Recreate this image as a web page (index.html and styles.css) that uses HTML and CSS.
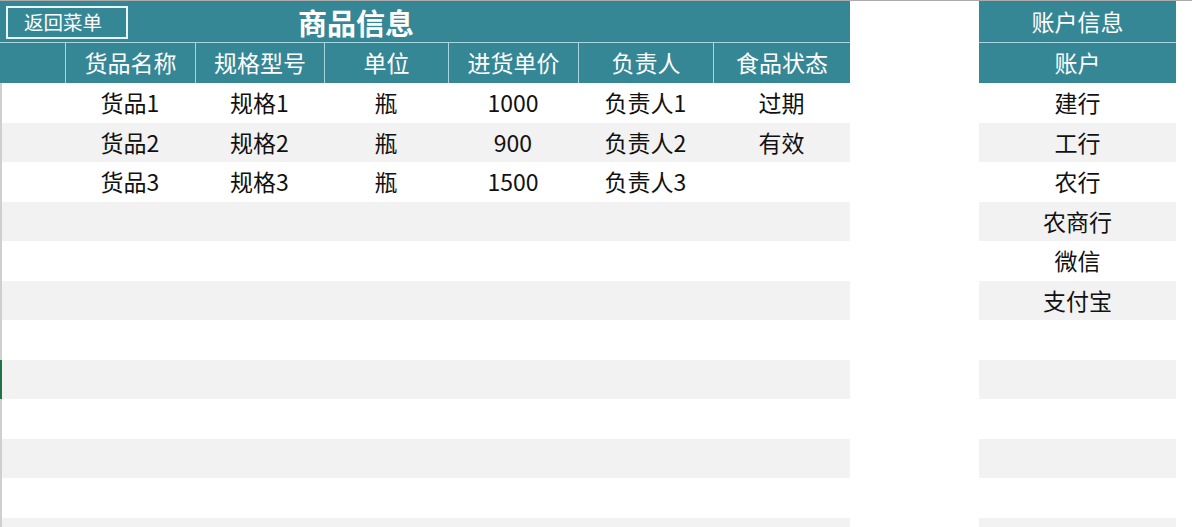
FILE: index.html
```html
<!DOCTYPE html>
<html lang="zh">
<head>
<meta charset="utf-8">
<link rel="stylesheet" href="styles.css">
</head>
<body>
<div class="topline"></div>
<div class="sheet">
  <section class="goods">
    <div class="title-row">
      <button class="back-btn">返回菜单</button>
      <h1 class="title">商品信息</h1>
    </div>
    <div class="grid">
      <div class="hd first"></div>
      <div class="hd">货品名称</div>
      <div class="hd">规格型号</div>
      <div class="hd">单位</div>
      <div class="hd">进货单价</div>
      <div class="hd">负责人</div>
      <div class="hd">食品状态</div>

      <div class="row"><div class="c first"></div><div class="c">货品1</div><div class="c">规格1</div><div class="c">瓶</div><div class="c">1000</div><div class="c">负责人1</div><div class="c">过期</div></div>
      <div class="row alt"><div class="c first"></div><div class="c">货品2</div><div class="c">规格2</div><div class="c">瓶</div><div class="c">900</div><div class="c">负责人2</div><div class="c">有效</div></div>
      <div class="row"><div class="c first"></div><div class="c">货品3</div><div class="c">规格3</div><div class="c">瓶</div><div class="c">1500</div><div class="c">负责人3</div><div class="c"></div></div>
      <div class="row alt"><div class="c first"></div></div>
      <div class="row"><div class="c first"></div></div>
      <div class="row alt"><div class="c first"></div></div>
      <div class="row"><div class="c first"></div></div>
      <div class="row alt"><div class="c first active"></div></div>
      <div class="row"><div class="c first"></div></div>
      <div class="row alt"><div class="c first"></div></div>
      <div class="row"><div class="c first"></div></div>
      <div class="row alt"><div class="c first"></div></div>
    </div>
  </section>

  <section class="accounts">
    <div class="acc-title">账户信息</div>
    <div class="acc-hd">账户</div>
    <div class="acc-row">建行</div>
    <div class="acc-row alt">工行</div>
    <div class="acc-row">农行</div>
    <div class="acc-row alt">农商行</div>
    <div class="acc-row">微信</div>
    <div class="acc-row alt">支付宝</div>
    <div class="acc-row"></div>
    <div class="acc-row alt"></div>
    <div class="acc-row"></div>
    <div class="acc-row alt"></div>
    <div class="acc-row"></div>
    <div class="acc-row alt"></div>
  </section>
</div>
</body>
</html>
```

FILE: styles.css
```css
* { box-sizing: border-box; }
html, body {
  margin: 0;
  padding: 0;
  background: #ffffff;
  overflow: hidden;
  height: 527px;
}
body {
  font-family: "Noto Sans CJK SC", "Noto Sans", sans-serif;
  color: #111;
}
.topline {
  height: 1px;
  background: #ababab;
}
.sheet {
  display: flex;
  gap: 129px;
  align-items: flex-start;
  height: 526px;
  overflow: hidden;
}
.goods {
  width: 850px;
}
.title-row {
  height: 42px;
  background: #368796;
  border-bottom: 1px solid #a9d6de;
  display: flex;
  align-items: center;
  padding-left: 6px;
}
.back-btn {
  width: 122px;
  height: 33px;
  margin-top: 2px;
  border: 2px solid #e8f4f6;
  background: transparent;
  color: #fff;
  font-family: inherit;
  font-size: 19.5px;
  line-height: 26px;
  padding: 0 8px 2px 0;
  text-align: center;
}
.title {
  margin: 0 0 0 170px;
  font-size: 29px;
  font-weight: 700;
  color: #fff;
  line-height: 38px;
  height: 38px;
  padding-bottom: 1px;
}
.grid {
  display: grid;
  grid-template-columns: 65px 130px 129px 124px 130px 135px 137px;
}
.hd {
  height: 40px;
  background: #368796;
  color: #fff;
  font-size: 23px;
  display: flex;
  align-items: center;
  justify-content: center;
  border-left: 1px solid #a9d6de;
  padding-bottom: 2px;
}
.hd.first { border-left: none; }
.row {
  display: contents;
}
.c {
  height: 39.5px;
  font-size: 23px;
  display: flex;
  align-items: center;
  justify-content: center;
  padding-bottom: 1px;
}
.row .c.first { grid-column: 1; border-left: 2px solid #cfcfcf; }
.row .c.first.active { border-left-color: #217346; }
.row .c { background: #fff; }
.row.alt .c { background: #f2f2f2; }
.row .c.first:only-child { grid-column: 1 / -1; }

.accounts {
  width: 197px;
}
.acc-title {
  height: 42px;
  background: #368796;
  border-bottom: 1px solid #a9d6de;
  color: #fff;
  font-size: 23px;
  display: flex;
  align-items: center;
  justify-content: center;
  padding-bottom: 1px;
}
.acc-hd {
  height: 40px;
  background: #368796;
  color: #fff;
  font-size: 23px;
  display: flex;
  align-items: center;
  justify-content: center;
  padding-bottom: 2px;
}
.acc-row {
  height: 39.5px;
  font-size: 23px;
  display: flex;
  align-items: center;
  justify-content: center;
  padding-bottom: 1px;
  background: #fff;
}
.acc-row.alt { background: #f2f2f2; }
```
